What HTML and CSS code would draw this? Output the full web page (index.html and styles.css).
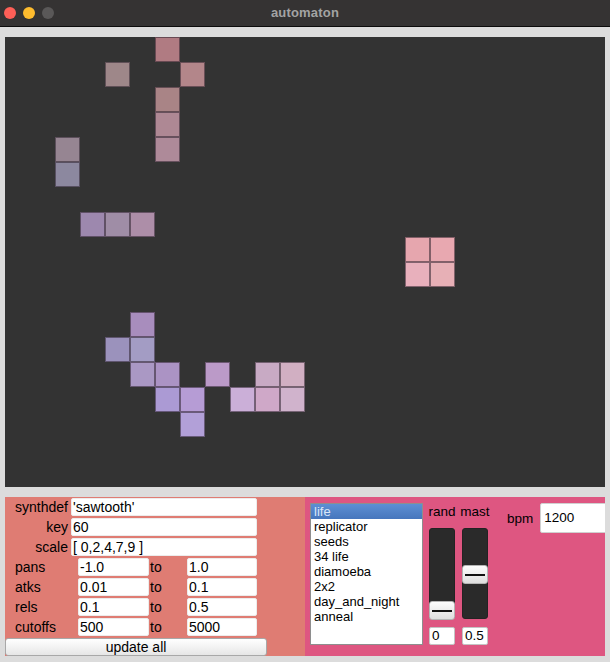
FILE: index.html
```html
<!DOCTYPE html>
<html>
<head>
<meta charset="utf-8">
<title>automaton</title>
<link rel="stylesheet" href="styles.css">
</head>
<body>
<div class="window">
  <header class="titlebar">
    <div class="lights">
      <span class="light red"></span>
      <span class="light yellow"></span>
      <span class="light gray"></span>
    </div>
    <div class="title">automaton</div>
    <div></div>
  </header>
  <main class="content">
    <div class="canvas">
      <div class="cell" style="grid-column:7;grid-row:1;background:#b07b82"></div>
      <div class="cell" style="grid-column:5;grid-row:2;background:#9e8789"></div>
      <div class="cell" style="grid-column:8;grid-row:2;background:#b3868a"></div>
      <div class="cell" style="grid-column:7;grid-row:3;background:#a98486"></div>
      <div class="cell" style="grid-column:7;grid-row:4;background:#ae8894"></div>
      <div class="cell" style="grid-column:7;grid-row:5;background:#ae8a99"></div>
      <div class="cell" style="grid-column:3;grid-row:5;background:#968592"></div>
      <div class="cell" style="grid-column:3;grid-row:6;background:#8c889f"></div>
      <div class="cell" style="grid-column:4;grid-row:8;background:#9d88ae"></div>
      <div class="cell" style="grid-column:5;grid-row:8;background:#9f8da6"></div>
      <div class="cell" style="grid-column:6;grid-row:8;background:#ad8ea8"></div>
      <div class="cell" style="grid-column:17;grid-row:9;background:#e6a6ae"></div>
      <div class="cell" style="grid-column:18;grid-row:9;background:#e8a8b0"></div>
      <div class="cell" style="grid-column:17;grid-row:10;background:#e8b0bc"></div>
      <div class="cell" style="grid-column:18;grid-row:10;background:#e7b0b6"></div>
      <div class="cell" style="grid-column:6;grid-row:12;background:#a88dbd"></div>
      <div class="cell" style="grid-column:5;grid-row:13;background:#9b92bc"></div>
      <div class="cell" style="grid-column:6;grid-row:13;background:#a39cc4"></div>
      <div class="cell" style="grid-column:6;grid-row:14;background:#aa98c4"></div>
      <div class="cell" style="grid-column:7;grid-row:14;background:#ab93c4"></div>
      <div class="cell" style="grid-column:9;grid-row:14;background:#bb9ac8"></div>
      <div class="cell" style="grid-column:11;grid-row:14;background:#c8aac4"></div>
      <div class="cell" style="grid-column:12;grid-row:14;background:#d1afc2"></div>
      <div class="cell" style="grid-column:7;grid-row:15;background:#ab9ad4"></div>
      <div class="cell" style="grid-column:8;grid-row:15;background:#b69cd5"></div>
      <div class="cell" style="grid-column:10;grid-row:15;background:#cbafd8"></div>
      <div class="cell" style="grid-column:11;grid-row:15;background:#cfa8c8"></div>
      <div class="cell" style="grid-column:12;grid-row:15;background:#d0b3cc"></div>
      <div class="cell" style="grid-column:8;grid-row:16;background:#b2a0d8"></div>
    </div>
    <div class="controls">
      <section class="synth-panel">
        <div class="row-wide"><span class="label-right">synthdef</span><span class="field">'sawtooth'</span></div>
        <div class="row-wide"><span class="label-right">key</span><span class="field">60</span></div>
        <div class="row-wide"><span class="label-right">scale</span><span class="field">[ 0,2,4,7,9 ]</span></div>
        <div class="row-range"><span class="label-left">pans</span><span class="field">-1.0</span><span class="to">to</span><span class="field">1.0</span></div>
        <div class="row-range"><span class="label-left">atks</span><span class="field">0.01</span><span class="to">to</span><span class="field">0.1</span></div>
        <div class="row-range"><span class="label-left">rels</span><span class="field">0.1</span><span class="to">to</span><span class="field">0.5</span></div>
        <div class="row-range"><span class="label-left">cutoffs</span><span class="field">500</span><span class="to">to</span><span class="field">5000</span></div>
        <button class="update-btn">update all</button>
      </section>
      <section class="rule-panel">
        <ul class="rule-list">
          <li class="selected">life</li>
          <li>replicator</li>
          <li>seeds</li>
          <li>34 life</li>
          <li>diamoeba</li>
          <li>2x2</li>
          <li>day_and_night</li>
          <li>anneal</li>
        </ul>
        <div class="slider-col">
          <span class="slider-label">rand</span>
          <div class="track"><div class="knob" style="top:72px"></div></div>
          <span class="numbox">0</span>
        </div>
        <div class="slider-col">
          <span class="slider-label">mast</span>
          <div class="track"><div class="knob" style="top:36px"></div></div>
          <span class="numbox">0.5</span>
        </div>
        <div class="bpm">
          <span class="bpm-label">bpm</span>
          <span class="bpm-field">1200</span>
        </div>
      </section>
    </div>
  </main>
</div>
</body>
</html>
```

FILE: styles.css
```css
* { box-sizing: border-box; }
html, body {
  margin: 0;
  padding: 0;
  background: #dcdcdc;
  font-family: "Liberation Sans", Arial, sans-serif;
}
.window {
  width: 610px;
  height: 662px;
  display: flex;
  flex-direction: column;
  overflow: hidden;
}
.titlebar {
  height: 27px;
  flex: none;
  background: #353333;
  border-bottom: 1px solid #0c0c0c;
  display: grid;
  grid-template-columns: 1fr auto 1fr;
  align-items: center;
}
.lights {
  display: flex;
  gap: 7px;
  padding-left: 4px;
  margin-top: -1px;
}
.light {
  width: 12px;
  height: 12px;
  border-radius: 50%;
  display: block;
}
.light.red { background: #fe5f57; }
.light.yellow { background: #febc2e; }
.light.gray { background: #5a5858; }
.title {
  color: #a3a3a3;
  font-weight: bold;
  font-size: 13px;
  letter-spacing: 0.2px;
  margin-top: -1px;
}
.content {
  flex: 1;
  background: #dcdcdc;
  padding: 10px 5px 0 5px;
  display: flex;
  flex-direction: column;
  gap: 10px;
}
.canvas {
  width: 600px;
  height: 450px;
  background: #333333;
  display: grid;
  grid-template-columns: repeat(24, 25px);
  grid-template-rows: repeat(18, 25px);
}
.cell {
  border: 1px solid rgba(45, 35, 45, 0.55);
}
.controls {
  display: flex;
  height: 159px;
}
.synth-panel {
  width: 300px;
  background: #df7c73;
  padding-top: 1px;
  display: flex;
  flex-direction: column;
  gap: 2px;
  font-size: 14px;
}
.row-wide {
  display: grid;
  grid-template-columns: 63px 186px;
  column-gap: 3px;
  height: 18px;
}
.row-range {
  display: grid;
  grid-template-columns: 73px 71px 38px 70px;
  height: 18px;
}
.label-right {
  text-align: right;
  line-height: 18px;
}
.label-left {
  padding-left: 10px;
  line-height: 18px;
}
.to {
  padding-left: 1px;
  line-height: 18px;
}
.field {
  background: #fff;
  border: 1px solid #ececec;
  border-radius: 2px;
  line-height: 16px;
  padding-left: 1px;
  white-space: nowrap;
  overflow: hidden;
}
.update-btn {
  width: 262px;
  height: 18px;
  padding: 0;
  margin: 0;
  font-family: "Liberation Sans", Arial, sans-serif;
  font-size: 14px;
  color: #000;
  background: linear-gradient(#ffffff, #e6e6e6);
  border: 1px solid #a8a8a8;
  border-radius: 3px;
  line-height: 16px;
}
.rule-panel {
  width: 300px;
  background: #de5681;
  padding: 6px 0 0 5px;
  display: flex;
  align-items: flex-start;
  overflow: hidden;
  font-size: 13px;
}
.rule-list {
  list-style: none;
  margin: 0;
  padding: 0;
  width: 113px;
  height: 142px;
  flex: none;
  background: #fff;
  border: 1px solid #8e8e8e;
}
.rule-list li {
  height: 15px;
  line-height: 15px;
  padding-left: 3px;
  color: #000;
}
.rule-list li.selected {
  background: linear-gradient(#5d8fd3, #4676bd);
  color: #dbe6f7;
}
.slider-col {
  width: 26px;
  flex: none;
  margin-left: 6px;
  display: flex;
  flex-direction: column;
  align-items: stretch;
}
.slider-col + .slider-col { margin-left: 7px; }
.slider-label {
  height: 18px;
  line-height: 18px;
  text-align: center;
  white-space: nowrap;
  font-size: 13.5px;
  margin: 0 -4px;
}
.track {
  position: relative;
  height: 91px;
  margin-top: 7px;
  background: #2a2a2a;
  border: 1px solid #232323;
  border-radius: 3px;
}
.knob {
  position: absolute;
  left: -1px;
  right: -1px;
  height: 19px;
  border-radius: 3px;
  background: linear-gradient(#fdfdfd, #dedede);
  border: 1px solid #b5b5b5;
  display: flex;
  align-items: center;
  padding: 0 2px;
}
.knob::after {
  content: "";
  display: block;
  height: 2px;
  width: 100%;
  background: #111;
}
.numbox {
  margin-top: 8px;
  height: 18px;
  line-height: 16px;
  background: #fff;
  border: 1px solid #c4c4c4;
  border-radius: 2px;
  padding-left: 2px;
  font-size: 13.5px;
}
.bpm {
  display: flex;
  align-items: center;
  margin-left: 19px;
  height: 30px;
  gap: 7px;
  flex: none;
}
.bpm-label {
  font-size: 13.5px;
}
.bpm-field {
  width: 70px;
  height: 30px;
  line-height: 28px;
  background: #fff;
  border: 1px solid #d0d0d0;
  border-radius: 2px;
  padding-left: 3px;
  font-size: 13.5px;
}
```
